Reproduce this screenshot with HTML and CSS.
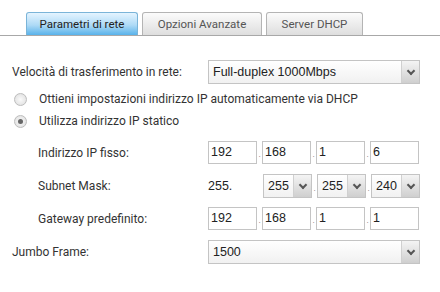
FILE: index.html
```html
<!DOCTYPE html>
<html lang="it">
<head>
  <meta charset="UTF-8" />
  <title>Parametri di rete</title>
  <link rel="stylesheet" href="styles.css">
</head>
<body>
  <div class="tabs">
    <div class="tab active">Parametri di rete</div>
    <div class="tab">Opzioni Avanzate</div>
    <div class="tab tab-dhcp">Server DHCP</div>
  </div>

  <div class="form">
    <div class="row">
      <label class="lbl">Velocità di trasferimento in rete:</label>
      <div class="sel wide"><span>Full-duplex 1000Mbps</span><i class="arrow"></i></div>
    </div>
    <div class="radio-row"><span class="radio"></span>Ottieni impostazioni indirizzo IP automaticamente via DHCP</div>
    <div class="radio-row"><span class="radio on"></span>Utilizza indirizzo IP statico</div>

    <div class="static">
      <div class="row sub">
        <label class="lbl">Indirizzo IP fisso:</label>
        <div class="ip">
          <span class="box">192</span><b>.</b><span class="box">168</span><b>.</b><span class="box">1</span><b>.</b><span class="box">6</span>
        </div>
      </div>
      <div class="row sub">
        <label class="lbl">Subnet Mask:</label>
        <div class="ip">
          <span class="fixed">255.</span>
          <div class="sel mini"><span>255</span><i class="arrow"></i></div><b>.</b>
          <div class="sel mini"><span>255</span><i class="arrow"></i></div><b>.</b>
          <div class="sel mini"><span>240</span><i class="arrow"></i></div>
        </div>
      </div>
      <div class="row sub">
        <label class="lbl">Gateway predefinito:</label>
        <div class="ip">
          <span class="box">192</span><b>.</b><span class="box">168</span><b>.</b><span class="box">1</span><b>.</b><span class="box">1</span>
        </div>
      </div>
    </div>
    <div class="row">
      <label class="lbl">Jumbo Frame:</label>
      <div class="sel wide"><span>1500</span><i class="arrow"></i></div>
    </div>
  </div>
</body>
</html>
```

FILE: styles.css
```css
body {
  margin: 0;
  background: #fff;
  font-family: Roboto, "Liberation Sans", sans-serif;
  font-size: 12px;
  color: #333;
}
.tabs {
  display: flex;
  gap: 4px;
  padding: 12px 0 0 26px;
  border-bottom: 1px solid #a8a8a8;
  height: 23px;
}
.tab {
  width: 110px;
  height: 22px;
  line-height: 22px;
  text-align: center;
  font-size: 11.5px;
  color: #555;
  border: 1px solid #b4b4b4;
  border-bottom: none;
  border-radius: 3px 3px 0 0;
  background: linear-gradient(#fbfbfb, #dedede);
}
.tab + .tab { width: 118px; }
.tab.tab-dhcp { width: 95px; }
.tab.active {
  color: #222;
  border-color: #7ab4d8;
  background: linear-gradient(#e4f4ff, #aedaf6 55%, #58b2ea);
}
.form { padding: 19px 0 0 12px; }
.row {
  display: flex;
  align-items: center;
  height: 33px;
}
.row .lbl { width: 196px; }
.row.sub .lbl { width: 170px; padding-left: 26px; }
.static { margin-top: 4px; }
.sel {
  display: flex;
  align-items: center;
  height: 22px;
  border: 1px solid #c4c4c4;
  background: linear-gradient(#fff, #f1f1f1);
  font-family: "Liberation Sans", Arial, sans-serif;
  font-size: 12.5px;
  color: #222;
}
.sel span { flex: 1; padding-left: 4px; }
.sel.wide { width: 210px; }
.sel.mini { width: 47px; }
.arrow {
  width: 17px;
  height: 22px;
  border-left: 1px solid #d0d0d0;
  background: linear-gradient(#f4f4f4, #cfcfcf);
  position: relative;
}
.arrow::after {
  content: "";
  position: absolute;
  left: 6px;
  top: 7px;
  width: 4px;
  height: 4px;
  border-right: 2px solid #555;
  border-bottom: 2px solid #555;
  transform: rotate(45deg);
}
.radio-row {
  display: flex;
  align-items: center;
  height: 22px;
}
.radio {
  width: 11px;
  height: 11px;
  margin: 0 12px 0 2px;
  border-radius: 50%;
  border: 1px solid #bdbdbd;
  background: radial-gradient(#fafafa, #dcdcdc);
  position: relative;
}
.radio.on::after {
  content: "";
  position: absolute;
  left: 3px;
  top: 3px;
  width: 5px;
  height: 5px;
  border-radius: 50%;
  background: #666;
}
.ip {
  display: flex;
  align-items: center;
  font-family: "Liberation Sans", Arial, sans-serif;
  font-size: 12.5px;
  color: #222;
}
.ip b {
  width: 5px;
  flex: none;
  font-weight: normal;
  font-size: 8px;
  align-self: flex-end;
  padding-bottom: 5px;
  text-align: center;
  color: #777;
}
.box {
  flex: none;
  width: 45px;
  height: 21px;
  line-height: 21px;
  padding-left: 2px;
  border: 1px solid #c4c4c4;
}
.fixed { width: 55px; flex: none; }
```
